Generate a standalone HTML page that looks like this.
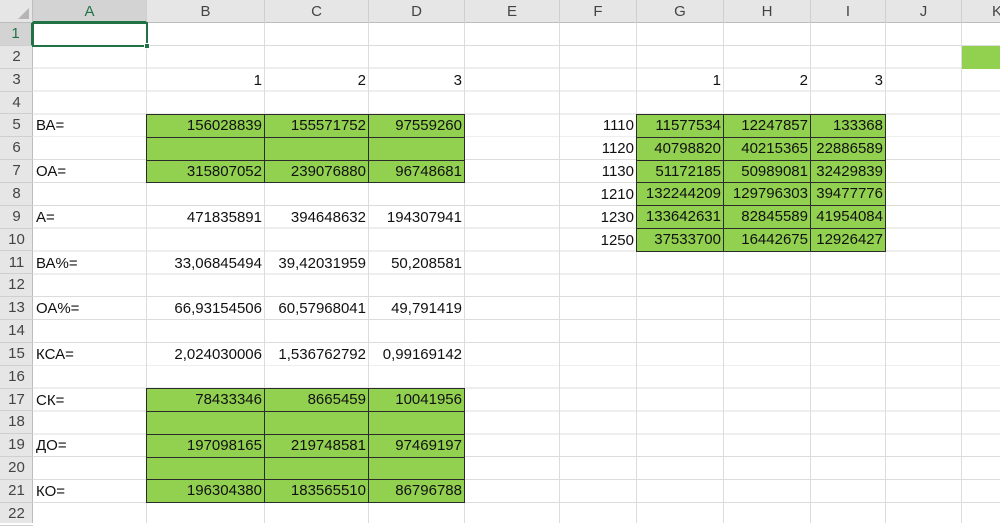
<!DOCTYPE html>
<html><head><meta charset="utf-8"><style>
*{margin:0;padding:0;box-sizing:border-box}
body{width:1000px;height:523px;overflow:hidden;background:#fff;position:relative;font-family:"Liberation Sans",sans-serif;font-size:15px;color:#111}
.hl{position:absolute;left:0;top:23px;width:1000px;height:500px;background:repeating-linear-gradient(to bottom,transparent 0,transparent 21.85px,#dcdcdc 21.85px,#dcdcdc 22.85px)}
.vl{position:absolute;top:0;width:1px;height:523px;background:#dcdcdc}
.ch{position:absolute;top:0;left:0;width:1000px;height:23px;background:#e6e6e6;border-bottom:1px solid #bdbdbd}
.rh{position:absolute;top:0;left:0;width:33px;height:523px;background:#e6e6e6;border-right:1px solid #bdbdbd}
.h{position:absolute;top:0;height:23px;line-height:23px;text-align:center;color:#444;border-right:1px solid #cfcfcf}
.r{position:absolute;left:0;width:33px;height:22.85px;line-height:22.85px;text-align:center;color:#444;border-bottom:1px solid #cfcfcf}
.c{position:absolute;height:22.85px;line-height:23px;padding:0 3px;text-align:right;white-space:nowrap}
.l{text-align:left}
.g{position:absolute;display:grid;gap:1px;padding:1px;background:#2b2b2b}
.g div{background:#92d050;text-align:right;padding-right:2px;line-height:22px;white-space:nowrap}
</style></head><body>
<div class="hl"></div>
<div class="vl" style="left:146px"></div><div class="vl" style="left:264px"></div><div class="vl" style="left:368px"></div><div class="vl" style="left:464px"></div><div class="vl" style="left:559px"></div><div class="vl" style="left:636px"></div><div class="vl" style="left:723px"></div><div class="vl" style="left:810px"></div><div class="vl" style="left:885px"></div><div class="vl" style="left:961px"></div>
<div class="ch">
<div class="h" style="left:33px;width:114px;background:#d3d3d3;border-bottom:2px solid #217346;height:23px;color:#217346">A</div>
<div class="h" style="left:147px;width:118px">B</div>
<div class="h" style="left:265px;width:104px">C</div>
<div class="h" style="left:369px;width:96px">D</div>
<div class="h" style="left:465px;width:95px">E</div>
<div class="h" style="left:560px;width:77px">F</div>
<div class="h" style="left:637px;width:87px">G</div>
<div class="h" style="left:724px;width:87px">H</div>
<div class="h" style="left:811px;width:75px">I</div>
<div class="h" style="left:886px;width:76px">J</div>
<div class="h" style="left:962px;width:76px;text-align:left;padding-left:30px">K</div>
</div>
<div class="rh">
<div class="r" style="top:23px;background:#d3d3d3;border-right:2px solid #217346;color:#217346">1</div>
<div class="r" style="top:45.85px">2</div><div class="r" style="top:68.7px">3</div><div class="r" style="top:91.55px">4</div><div class="r" style="top:114.4px">5</div><div class="r" style="top:137.25px">6</div><div class="r" style="top:160.1px">7</div><div class="r" style="top:182.95px">8</div><div class="r" style="top:205.8px">9</div><div class="r" style="top:228.65px">10</div><div class="r" style="top:251.5px">11</div><div class="r" style="top:274.35px">12</div><div class="r" style="top:297.2px">13</div><div class="r" style="top:320.05px">14</div><div class="r" style="top:342.9px">15</div><div class="r" style="top:365.75px">16</div><div class="r" style="top:388.6px">17</div><div class="r" style="top:411.45px">18</div><div class="r" style="top:434.3px">19</div><div class="r" style="top:457.15px">20</div><div class="r" style="top:480px">21</div><div class="r" style="top:502.85px">22</div>
</div>
<div style="position:absolute;left:0;top:0;width:33px;height:23px;background:#e6e6e6;border-right:1px solid #bdbdbd;border-bottom:1px solid #bdbdbd"></div>
<div style="position:absolute;left:18px;top:8px;width:0;height:0;border-left:11px solid transparent;border-bottom:11px solid #b5b5b5"></div>
<!-- selection -->
<div style="position:absolute;left:32px;top:22px;width:116px;height:24.5px;border:2px solid #217346"></div>
<div style="position:absolute;left:144px;top:43px;width:6px;height:6px;background:#217346;border:1px solid #fff"></div>
<!-- K2 -->
<div style="position:absolute;left:962px;top:45.85px;width:38px;height:22.85px;background:#92d050"></div>
<!-- row 3 -->
<div class="c" style="left:147px;width:118px;top:68.7px">1</div>
<div class="c" style="left:265px;width:104px;top:68.7px">2</div>
<div class="c" style="left:369px;width:96px;top:68.7px">3</div>
<div class="c" style="left:637px;width:87px;top:68.7px">1</div>
<div class="c" style="left:724px;width:87px;top:68.7px">2</div>
<div class="c" style="left:811px;width:75px;top:68.7px">3</div>
<!-- labels -->
<div class="c l" style="left:33px;width:114px;top:114.4px">ВА=</div>
<div class="c l" style="left:33px;width:114px;top:160.1px">ОА=</div>
<div class="c l" style="left:33px;width:114px;top:205.8px">А=</div>
<div class="c l" style="left:33px;width:114px;top:251.5px">ВА%=</div>
<div class="c l" style="left:33px;width:114px;top:297.2px">ОА%=</div>
<div class="c l" style="left:33px;width:114px;top:342.9px">КСА=</div>
<div class="c l" style="left:33px;width:114px;top:388.6px">СК=</div>
<div class="c l" style="left:33px;width:114px;top:434.3px">ДО=</div>
<div class="c l" style="left:33px;width:114px;top:480px">КО=</div>
<!-- white numbers -->
<div class="c" style="left:147px;width:118px;top:205.8px">471835891</div>
<div class="c" style="left:265px;width:104px;top:205.8px">394648632</div>
<div class="c" style="left:369px;width:96px;top:205.8px">194307941</div>
<div class="c" style="left:147px;width:118px;top:251.5px">33,06845494</div>
<div class="c" style="left:265px;width:104px;top:251.5px">39,42031959</div>
<div class="c" style="left:369px;width:96px;top:251.5px">50,208581</div>
<div class="c" style="left:147px;width:118px;top:297.2px">66,93154506</div>
<div class="c" style="left:265px;width:104px;top:297.2px">60,57968041</div>
<div class="c" style="left:369px;width:96px;top:297.2px">49,791419</div>
<div class="c" style="left:147px;width:118px;top:342.9px">2,024030006</div>
<div class="c" style="left:265px;width:104px;top:342.9px">1,536762792</div>
<div class="c" style="left:369px;width:96px;top:342.9px">0,99169142</div>
<!-- F col -->
<div class="c" style="left:560px;width:77px;top:114.4px">1110</div>
<div class="c" style="left:560px;width:77px;top:137.25px">1120</div>
<div class="c" style="left:560px;width:77px;top:160.1px">1130</div>
<div class="c" style="left:560px;width:77px;top:182.95px">1210</div>
<div class="c" style="left:560px;width:77px;top:205.8px">1230</div>
<div class="c" style="left:560px;width:77px;top:228.65px">1250</div>
<!-- green blocks -->
<div class="g" style="left:146px;top:113.9px;grid-template-columns:117px 103px 95px;grid-template-rows:repeat(3,21.85px)">
<div>156028839</div><div>155571752</div><div>97559260</div>
<div></div><div></div><div></div>
<div>315807052</div><div>239076880</div><div>96748681</div>
</div>
<div class="g" style="left:146px;top:388.1px;grid-template-columns:117px 103px 95px;grid-template-rows:repeat(5,21.85px)">
<div>78433346</div><div>8665459</div><div>10041956</div>
<div></div><div></div><div></div>
<div>197098165</div><div>219748581</div><div>97469197</div>
<div></div><div></div><div></div>
<div>196304380</div><div>183565510</div><div>86796788</div>
</div>
<div class="g" style="left:636px;top:113.9px;grid-template-columns:86px 86px 74px;grid-template-rows:repeat(6,21.85px)">
<div>11577534</div><div>12247857</div><div>133368</div>
<div>40798820</div><div>40215365</div><div>22886589</div>
<div>51172185</div><div>50989081</div><div>32429839</div>
<div>132244209</div><div>129796303</div><div>39477776</div>
<div>133642631</div><div>82845589</div><div>41954084</div>
<div>37533700</div><div>16442675</div><div>12926427</div>
</div>
</body></html>
